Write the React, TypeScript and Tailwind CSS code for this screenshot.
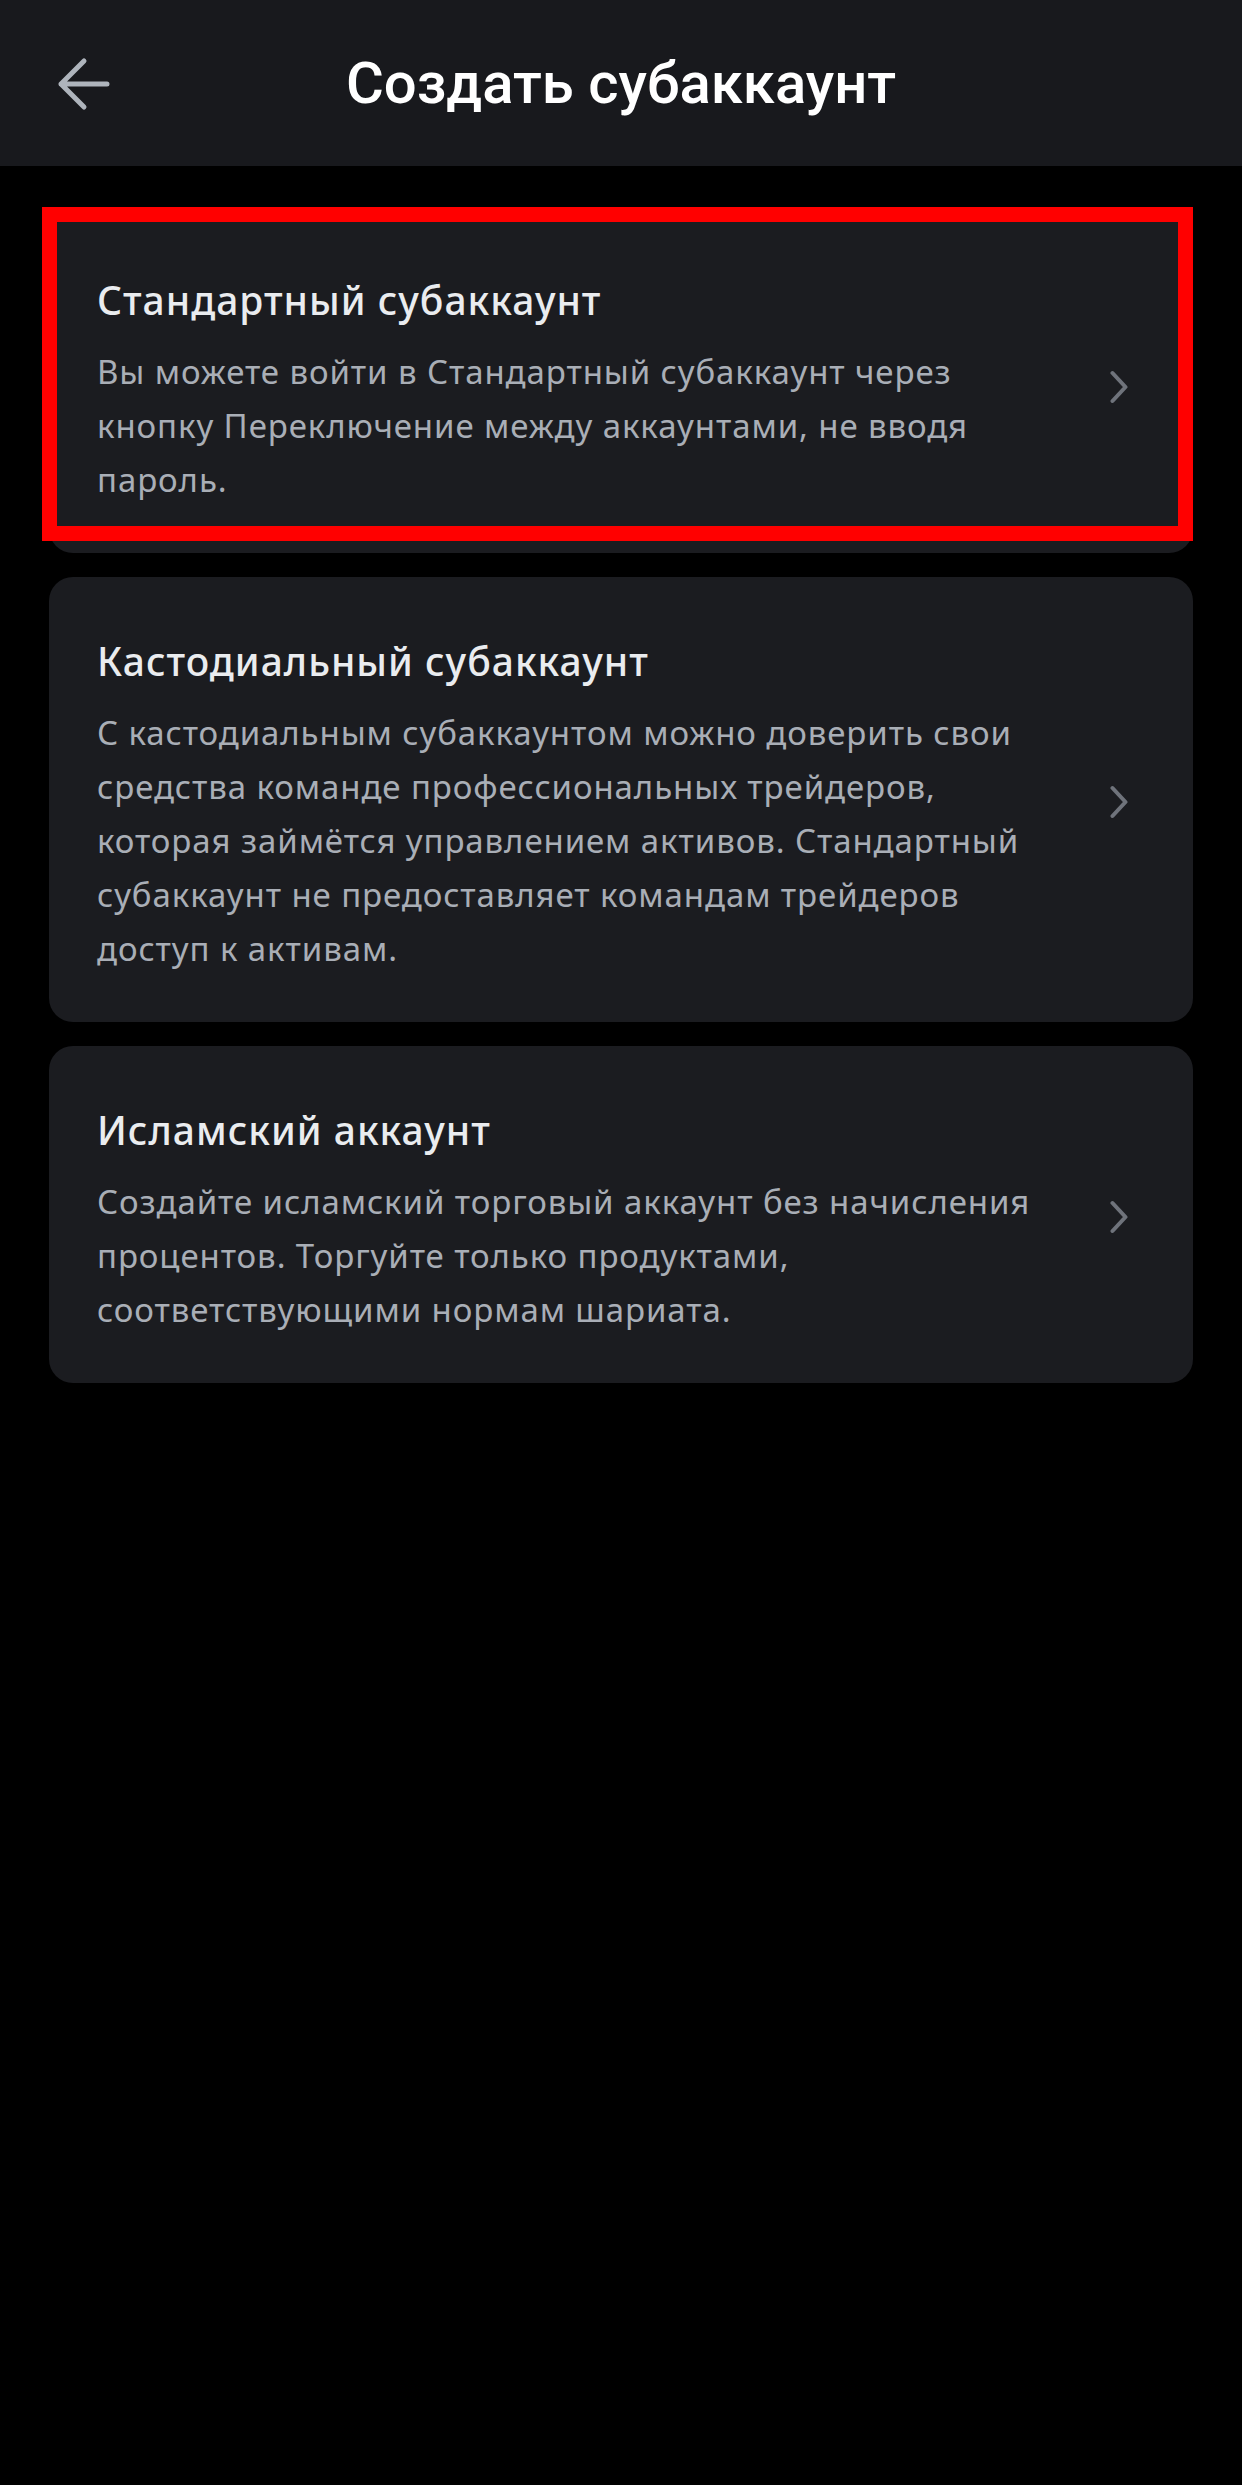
import { ReactNode } from "react";

interface OptionCardProps {
  title: string;
  children: ReactNode;
  highlighted?: boolean;
}

const BackArrow = () => (
  <svg width="56" height="56" viewBox="0 0 56 56" fill="none">
    <path
      d="M51 28H5M28 5L5 28L28 51"
      stroke="#aeb4bc"
      strokeWidth="5"
      strokeLinecap="round"
      strokeLinejoin="round"
    />
  </svg>
);

const Chevron = () => (
  <svg width="18" height="34" viewBox="0 0 18 34" fill="none" className="shrink-0">
    <path
      d="M2.5 3L15.5 17L2.5 31"
      stroke="#6f737b"
      strokeWidth="4"
      strokeLinecap="round"
      strokeLinejoin="round"
    />
  </svg>
);

const OptionCard = ({ title, children, highlighted }: OptionCardProps) => (
  <div className="relative">
    <div className="flex items-center gap-[50px] rounded-[24px] bg-[#1b1c20] pl-[48px] pr-[65px] pt-[51px] pb-[46px]">
      <div className="flex-1">
        <div className="text-[39px] leading-[66px] font-medium tracking-[1px] text-[#eaecef]">{title}</div>
        <p className="mt-[12px] text-[33px] leading-[54px] tracking-[0.9px] text-[#a9aeb6]">{children}</p>
      </div>
      <Chevron />
    </div>
    {highlighted && (
      <div className="pointer-events-none absolute -left-[7px] -top-[9px] right-0 bottom-[12px] border-[15px] border-[#ff0000]" />
    )}
  </div>
);

export default function App() {
  return (
    <div
      className="min-h-[2485px] w-full bg-black"
      style={{ fontFamily: "'Noto Sans', Roboto, sans-serif" }}
    >
      <header className="relative flex h-[166px] items-center justify-center bg-[#18191d]">
        <button className="absolute left-[56px] top-[56px]">
          <BackArrow />
        </button>
        <h1 className="font-['Roboto',sans-serif] text-[58px] font-medium text-white">Создать субаккаунт</h1>
      </header>

      <main className="flex flex-col gap-[24px] px-[49px] pt-[50px]">
        <OptionCard title="Стандартный субаккаунт" highlighted>
          Вы можете войти в Стандартный субаккаунт через кнопку Переключение между аккаунтами, не вводя
          пароль.
        </OptionCard>
        <OptionCard title="Кастодиальный субаккаунт">
          С кастодиальным субаккаунтом можно доверить свои средства команде профессиональных трейдеров,
          которая займётся управлением активов. Стандартный субаккаунт не предоставляет командам
          трейдеров доступ к активам.
        </OptionCard>
        <OptionCard title="Исламский аккаунт">
          Создайте исламский торговый аккаунт без начисления процентов. Торгуйте только продуктами,
          соответствующими нормам шариата.
        </OptionCard>
      </main>
    </div>
  );
}
